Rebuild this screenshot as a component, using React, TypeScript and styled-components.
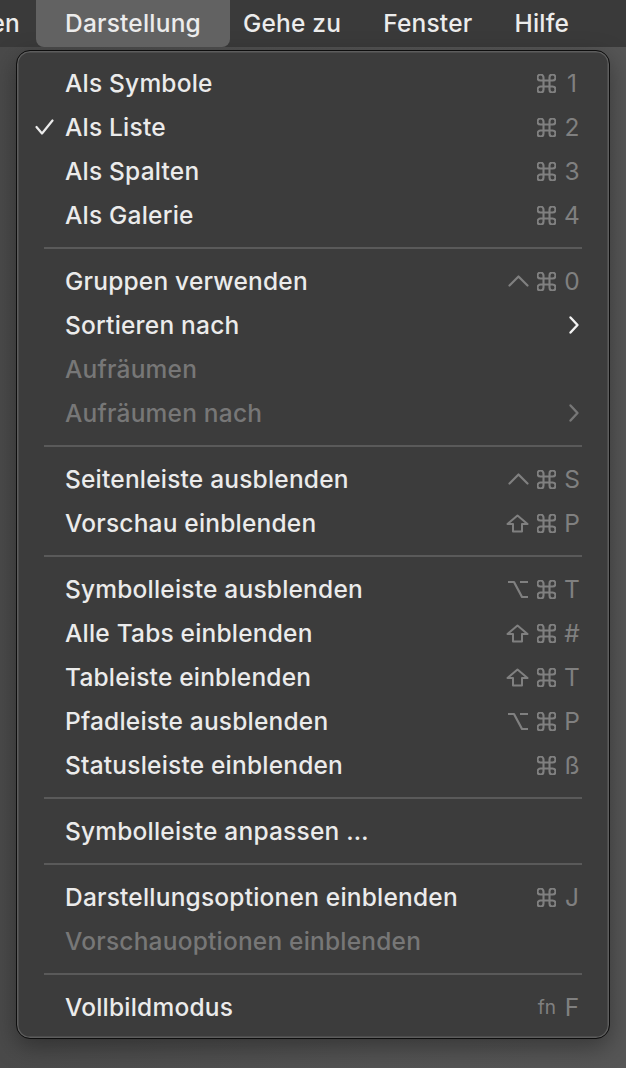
import styled, { createGlobalStyle } from 'styled-components';

const GlobalStyle = createGlobalStyle`
  html, body {
    margin: 0;
    padding: 0;
    background: #515151;
  }
  body {
    font-family: Inter, "Noto Sans", "DejaVu Sans", sans-serif;
    -webkit-font-smoothing: antialiased;
  }
`;

type Mod = 'ctrl' | 'cmd' | 'shift' | 'opt' | 'fn';
type Shortcut = { mods: Mod[]; key: string };

type Entry =
  | { kind: 'sep' }
  | {
      kind: 'item';
      label: string;
      checked?: boolean;
      disabled?: boolean;
      submenu?: boolean;
      shortcut?: Shortcut;
    };

const ENTRIES: Entry[] = [
  { kind: 'item', label: 'Als Symbole', shortcut: { mods: ['cmd'], key: '1' } },
  { kind: 'item', label: 'Als Liste', checked: true, shortcut: { mods: ['cmd'], key: '2' } },
  { kind: 'item', label: 'Als Spalten', shortcut: { mods: ['cmd'], key: '3' } },
  { kind: 'item', label: 'Als Galerie', shortcut: { mods: ['cmd'], key: '4' } },
  { kind: 'sep' },
  { kind: 'item', label: 'Gruppen verwenden', shortcut: { mods: ['ctrl', 'cmd'], key: '0' } },
  { kind: 'item', label: 'Sortieren nach', submenu: true },
  { kind: 'item', label: 'Aufräumen', disabled: true },
  { kind: 'item', label: 'Aufräumen nach', disabled: true, submenu: true },
  { kind: 'sep' },
  { kind: 'item', label: 'Seitenleiste ausblenden', shortcut: { mods: ['ctrl', 'cmd'], key: 'S' } },
  { kind: 'item', label: 'Vorschau einblenden', shortcut: { mods: ['shift', 'cmd'], key: 'P' } },
  { kind: 'sep' },
  { kind: 'item', label: 'Symbolleiste ausblenden', shortcut: { mods: ['opt', 'cmd'], key: 'T' } },
  { kind: 'item', label: 'Alle Tabs einblenden', shortcut: { mods: ['shift', 'cmd'], key: '#' } },
  { kind: 'item', label: 'Tableiste einblenden', shortcut: { mods: ['shift', 'cmd'], key: 'T' } },
  { kind: 'item', label: 'Pfadleiste ausblenden', shortcut: { mods: ['opt', 'cmd'], key: 'P' } },
  { kind: 'item', label: 'Statusleiste einblenden', shortcut: { mods: ['cmd'], key: 'ß' } },
  { kind: 'sep' },
  { kind: 'item', label: 'Symbolleiste anpassen …' },
  { kind: 'sep' },
  { kind: 'item', label: 'Darstellungsoptionen einblenden', shortcut: { mods: ['cmd'], key: 'J' } },
  { kind: 'item', label: 'Vorschauoptionen einblenden', disabled: true },
  { kind: 'sep' },
  { kind: 'item', label: 'Vollbildmodus', shortcut: { mods: ['fn'], key: 'F' } },
];

const MENUBAR = ['Darstellung', 'Gehe zu', 'Fenster', 'Hilfe'];

// modifier key glyphs, drawn to match the macOS menu font
const ModGlyph = ({ mod }: { mod: Mod }) => {
  const stroke = {
    fill: 'none',
    stroke: 'currentColor',
    strokeLinecap: 'round' as const,
    strokeLinejoin: 'round' as const,
  };
  switch (mod) {
    case 'cmd':
      return (
        <svg width="19" height="19" viewBox="2.5 2.5 19 19">
          <path
            {...stroke}
            strokeWidth="2.1"
            d="M15 6v12a3 3 0 1 0 3-3H6a3 3 0 1 0 3 3V6a3 3 0 1 0-3 3h12a3 3 0 1 0-3-3"
          />
        </svg>
      );
    case 'ctrl':
      return (
        <svg width="21" height="12" viewBox="0 0 21 12">
          <path {...stroke} strokeWidth="2.2" d="M1.5 10.5 L10.5 1.5 L19.5 10.5" />
        </svg>
      );
    case 'shift':
      return (
        <svg width="23" height="19" viewBox="0 0 23 19">
          <path {...stroke} strokeWidth="2" d="M11.5 1.5 L21.5 10 L16 10 L16 17.5 L7 17.5 L7 10 L1.5 10 Z" />
        </svg>
      );
    case 'opt':
      return (
        <svg width="22" height="19" viewBox="0 0 22 19">
          <path {...stroke} strokeWidth="2.2" strokeLinecap="butt" d="M1 2 H7 L15 17 H21 M13 2 H21" />
        </svg>
      );
    default:
      return <FnText>fn</FnText>;
  }
};

const App = () => (
  <>
    <GlobalStyle />
    <Screen>
      <MenuBar>
        <ClippedItem>en</ClippedItem>
        {MENUBAR.map((title) => (
          <BarItem key={title} $active={title === 'Darstellung'}>
            {title}
          </BarItem>
        ))}
      </MenuBar>
      <Dropdown>
        {ENTRIES.map((entry, i) =>
          entry.kind === 'sep' ? (
            <Separator key={i} />
          ) : (
            <Row key={i} $disabled={entry.disabled}>
              <Check>
                {entry.checked && (
                  <svg width="19" height="16" viewBox="0 0 19 16">
                    <path
                      d="M1.5 8 L7 14.5 L17.5 1.5"
                      fill="none"
                      stroke="currentColor"
                      strokeWidth="2.2"
                      strokeLinecap="round"
                      strokeLinejoin="round"
                    />
                  </svg>
                )}
              </Check>
              <Label>{entry.label}</Label>
              {entry.shortcut && (
                <Keys>
                  {entry.shortcut.mods.map((m) => (
                    <ModGlyph key={m} mod={m} />
                  ))}
                  <Key>{entry.shortcut.key}</Key>
                </Keys>
              )}
              {entry.submenu && (
                <Chevron width="12" height="20" viewBox="0 0 12 20" $disabled={entry.disabled}>
                  <path
                    d="M2.5 2.5 L9.5 10 L2.5 17.5"
                    fill="none"
                    stroke="currentColor"
                    strokeWidth="2.4"
                    strokeLinecap="round"
                    strokeLinejoin="round"
                  />
                </Chevron>
              )}
            </Row>
          ),
        )}
      </Dropdown>
    </Screen>
  </>
);

export default App;

const Screen = styled.div`
  width: 626px;
  height: 1068px;
  overflow: hidden;
  background: linear-gradient(90deg, #4a4a4a 0%, #535353 60%, #565656 100%);
`;

const MenuBar = styled.div`
  height: 47px;
  display: flex;
  align-items: stretch;
  background: #3a3a3a;
  font-size: 24.5px;
  font-weight: 500;
  letter-spacing: 0.2px;
  color: #ececec;
`;

const ClippedItem = styled.div`
  width: 20px;
  padding-right: 24px;
  display: flex;
  align-items: center;
  justify-content: flex-end;
  overflow: hidden;
  padding-bottom: 2px;
`;

const BarItem = styled.div<{ $active?: boolean }>`
  display: flex;
  align-items: center;
  padding: 0 ${(p) => (p.$active ? '29px' : '21px')} 2px;
  margin: 0 ${(p) => (p.$active ? '-8px' : '0')};
  border-radius: 0 0 8px 8px;
  background: ${(p) => (p.$active ? '#626262' : 'transparent')};
`;

const Dropdown = styled.div`
  margin: 3px 0 0 16px;
  width: 594px;
  box-sizing: border-box;
  padding: 10px 0 9px;
  background: #3c3c3c;
  border-radius: 14px;
  border: 1px solid #0e0e0e;
  box-shadow: inset 0 0 0 1.5px #5d5d5d, 0 8px 24px rgba(0, 0, 0, 0.35);
`;

const Row = styled.div<{ $disabled?: boolean }>`
  height: 44px;
  display: flex;
  align-items: center;
  padding: 0 29px 0 18px;
  font-size: 24.5px;
  font-weight: 500;
  letter-spacing: 0.2px;
  color: ${(p) => (p.$disabled ? '#777777' : '#ebebeb')};
`;

const Check = styled.span`
  width: 30px;
  display: flex;
  align-items: center;
  color: #ebebeb;
`;

const Label = styled.span`
  flex: 1;
  white-space: nowrap;
`;

const Keys = styled.span`
  display: flex;
  align-items: center;
  gap: 8px;
  color: #808080;
  font-weight: 400;
`;

const FnText = styled.span`
  font-size: 19px;
  letter-spacing: 0;
`;

const Key = styled.span`
  width: 16px;
  text-align: center;
  letter-spacing: 0;
`;

const Chevron = styled.svg<{ $disabled?: boolean }>`
  color: ${(p) => (p.$disabled ? '#777777' : '#f2f2f2')};
`;

const Separator = styled.div`
  height: 2px;
  margin: 10px 27px;
  background: #5a5a5a;
`;
